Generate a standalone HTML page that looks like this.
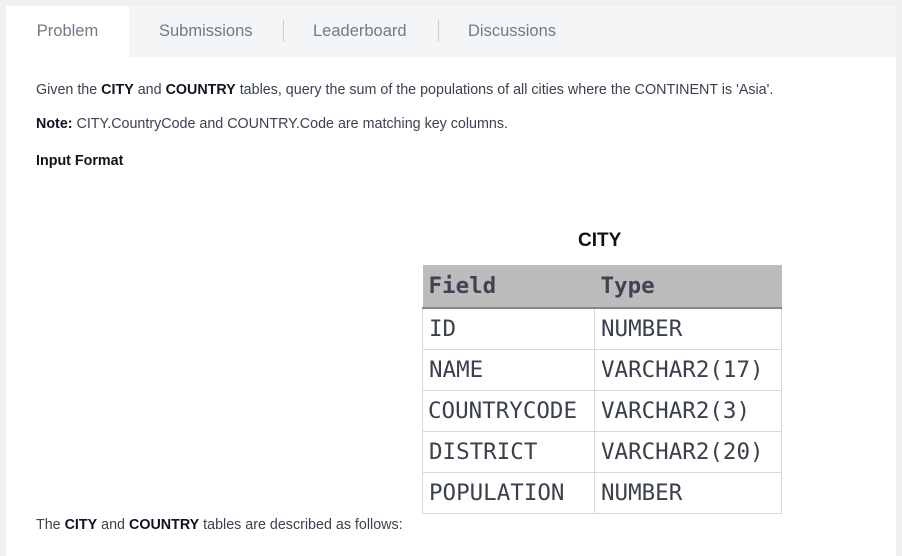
<!DOCTYPE html>
<html><head><style>
body{margin:0;width:902px;height:556px;background:#eef0f2;font-family:"Liberation Sans",sans-serif;overflow:hidden;position:relative}
.tabs{position:absolute;top:6px;left:6px;right:6px;height:51px;background:#f3f5f6}
.tab{position:absolute;top:0;height:51px;line-height:50px;font-size:16.5px;color:#6f7b86}
.active{background:#fff;left:0;width:123px;text-align:center}
.sep{position:absolute;top:14px;width:1px;height:22px;background:#c8cdd2}
.panel{position:absolute;top:57px;left:6px;width:890px;bottom:0;background:#fff}
p{position:absolute;left:36px;margin:0;font-size:14.3px;color:#39424e;white-space:nowrap}
b{color:#0e141e}
table{position:absolute;left:422px;top:265px;width:359px;table-layout:fixed;border-collapse:collapse;font-family:"DejaVu Sans Mono","Liberation Mono",monospace;font-size:22.5px;color:#3a404c}
td{border:1px solid #d8d8d8;height:41px;padding:0 6px;box-sizing:border-box;white-space:nowrap;overflow:hidden}
th{background:#bcbcbc;text-align:left;height:42px;padding:0 6px;font-weight:bold;color:#3f4450;border-bottom:2px solid #888}
.cap{position:absolute;left:578px;top:230px;font-weight:bold;font-size:19px;color:#111}
</style></head><body>
<div class="tabs">
<div class="tab active">Problem</div>
<div class="tab" style="left:153px">Submissions</div>
<div class="sep" style="left:277px"></div>
<div class="tab" style="left:307px">Leaderboard</div>
<div class="sep" style="left:432px"></div>
<div class="tab" style="left:462px">Discussions</div>
</div>
<div class="panel"></div>
<p style="top:82px">Given the <b>CITY</b> and <b>COUNTRY</b> tables, query the sum of the populations of all cities where the CONTINENT is 'Asia'.</p>
<p style="top:116px"><b>Note:</b> CITY.CountryCode and COUNTRY.Code are matching key columns.</p>
<p style="top:153px"><b>Input Format</b></p>
<div class="cap">CITY</div>
<table>
<colgroup><col style="width:172px"><col style="width:187px"></colgroup>
<tr><th>Field</th><th>Type</th></tr>
<tr><td>ID</td><td>NUMBER</td></tr>
<tr><td>NAME</td><td>VARCHAR2(17)</td></tr>
<tr><td style="padding:0 5px">COUNTRYCODE</td><td>VARCHAR2(3)</td></tr>
<tr><td>DISTRICT</td><td>VARCHAR2(20)</td></tr>
<tr><td>POPULATION</td><td>NUMBER</td></tr>
</table>
<p style="top:517px">The <b>CITY</b> and <b>COUNTRY</b> tables are described as follows:</p>
</body></html>
